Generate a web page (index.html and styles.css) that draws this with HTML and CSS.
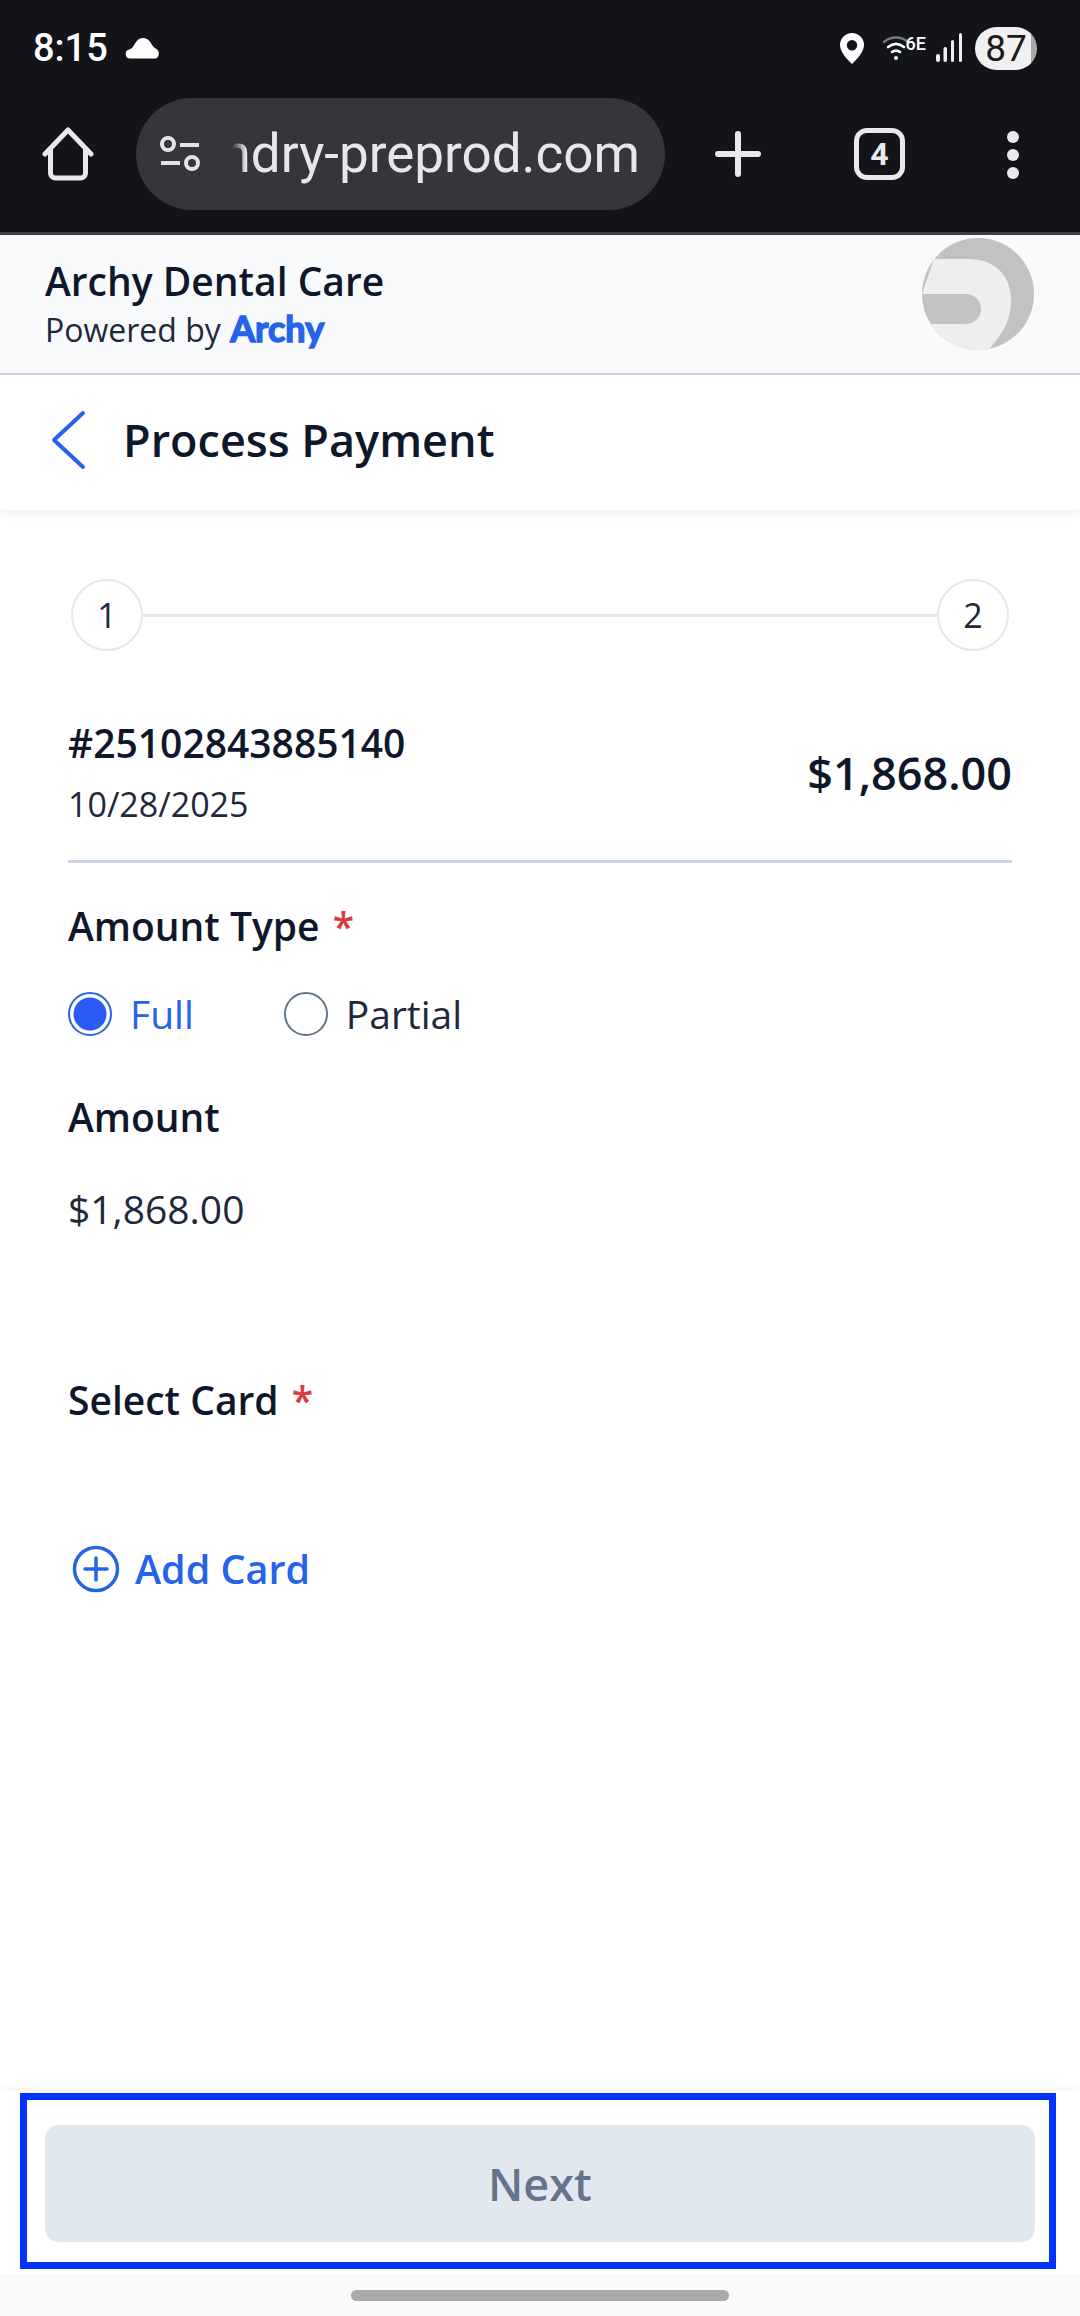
FILE: index.html
```html
<!DOCTYPE html>
<html lang="en">
<head>
  <meta charset="UTF-8">
  <title>Process Payment</title>
  <link rel="stylesheet" href="styles.css">
</head>
<body>

  <div class="browser-top">
    <div class="status-bar">
      <div class="status-left">
        <span class="clock">8:15</span>
        <svg class="cloud" width="36" height="22" viewBox="0 0 36 22"><path d="M5 21.5a4.6 4.6 0 0 1-1-9c1.2-.4 2.400-.8 3.600-2.300C10 7 12 1 18 1c5.500 0 7.500 4.500 9.500 7.500 1 1.500 2 2.500 4 3.500 3.500 1.700 3 9.500-1.500 9.500z" fill="#fff"/></svg>
      </div>
      <div class="status-right">
        <svg class="pin" width="24" height="31" viewBox="0 0 24 31"><path fill-rule="evenodd" d="M12 0a12 12 0 0 1 12 12c0 7-7 14-12 19C7 26 0 19 0 12A12 12 0 0 1 12 0zm0 7a5.200 5.200 0 1 0 0 10.400A5.200 5.200 0 0 0 12 7z" fill="#fff"/></svg>
        <div class="wifi">
          <svg width="28" height="28" viewBox="0 0 28 28" fill="none" stroke-linecap="round" stroke-width="2.600">
            <path d="M2 8C9 2 19 2 26 8" stroke="#77787c"/>
            <path d="M6 13c5-4 11-4 16 0" stroke="#fff"/>
            <path d="M10 18c3-2 5-2 8 0" stroke="#fff"/>
            <circle cx="14" cy="24" r="2" fill="#fff"/>
          </svg>
          <span class="wifi-tag">6E</span>
        </div>
        <svg class="signal" width="27" height="30" viewBox="0 0 27 30" fill="#eee">
          <rect x="0" y="21" width="4" height="8" rx="2"/>
          <rect x="7.500" y="14" width="3.500" height="15" rx="1.700"/>
          <rect x="15" y="7" width="3" height="22" rx="1.500"/>
          <rect x="23" y="0" width="3" height="29" rx="1.500"/>
        </svg>
        <div class="battery">87</div>
      </div>
    </div>

    <div class="toolbar">
      <svg class="home-icon" width="52" height="54" viewBox="0 0 52 54" fill="none" stroke="#e8e9ed" stroke-width="5" stroke-linejoin="round" stroke-linecap="round">
        <path d="M3 27L26 3l23 24"/>
        <path d="M8.500 22v24a5 5 0 0 0 5 5h25a5 5 0 0 0 5-5V22"/>
      </svg>
      <div class="url-pill">
        <svg width="42" height="38" viewBox="0 0 42 38" fill="none" stroke="#e3e4e8" stroke-width="4">
          <circle cx="9" cy="9" r="6"/>
          <path d="M21 10h19"/>
          <path d="M2 28h19"/>
          <circle cx="33" cy="28" r="6"/>
        </svg>
        <div class="url-clip"><span>foundry-preprod.com</span></div>
      </div>
      <svg class="plus-icon" width="46" height="46" viewBox="0 0 46 46" stroke="#e8e9ed" stroke-width="6" stroke-linecap="round">
        <path d="M23 3v40M3 23h40"/>
      </svg>
      <div class="tab-count">4</div>
      <div class="menu-dots"><i></i><i></i><i></i></div>
    </div>
  </div>

  <div class="clinic-bar">
    <div>
      <div class="clinic-name">Archy Dental Care</div>
      <div class="powered">Powered by <span class="archy-logo">Archy</span></div>
    </div>
    <svg class="avatar" width="112" height="112" viewBox="0 0 112 112">
      <circle cx="56" cy="56" r="56" fill="#c2c2c2"/>
      <path d="M12 21h34c28 0 43 17 43 42 0 18-8 33-22 48a56 56 0 0 1-67-55z" fill="#eeeeee"/>
      <path d="M0 56h44a15 15 0 0 1 0 30H9a56 56 0 0 1-9-30z" fill="#c2c2c2"/>
    </svg>
  </div>

  <div class="page-title">
    <svg width="36" height="60" viewBox="0 0 36 60" fill="none" stroke="#2563eb" stroke-width="4" stroke-linecap="round" stroke-linejoin="round">
      <path d="M33 3L4 30l29 27"/>
    </svg>
    <h1>Process Payment</h1>
  </div>

  <div class="main">
    <div class="stepper">
      <div class="step">1</div>
      <div class="step-line"></div>
      <div class="step">2</div>
    </div>

    <div class="invoice">
      <div>
        <div class="invoice-no">#25102843885140</div>
        <div class="invoice-date">10/28/2025</div>
      </div>
      <div class="invoice-total">$1,868.00</div>
    </div>

    <div class="label label-type">Amount Type <span class="req">*</span></div>
    <div class="radios">
      <div class="radio-item selected"><span class="radio"></span>Full</div>
      <div class="radio-item"><span class="radio"></span>Partial</div>
    </div>

    <div class="label label-amount">Amount</div>
    <div class="amount-value">$1,868.00</div>

    <div class="label label-card">Select Card <span class="req">*</span></div>
    <div class="add-card">
      <svg width="48" height="48" viewBox="0 0 48 48" fill="none" stroke="#2563eb" stroke-width="3.500" stroke-linecap="round">
        <circle cx="24" cy="24" r="21.500"/>
        <path d="M24 13v22M13 24h22"/>
      </svg>
      Add Card
    </div>
  </div>

  <div class="footer">
    <div class="footer-inner">
      <button class="next-btn">Next</button>
    </div>
    <div class="home-area"><div class="home-bar"></div></div>
    <div class="highlight"></div>
  </div>

</body>
</html>
```

FILE: styles.css
```css
* {
  box-sizing: border-box;
}

body {
  margin: 0;
  width: 1080px;
  height: 2316px;
  display: flex;
  flex-direction: column;
  overflow: hidden;
  background-color: #fff;
  font-family: "Open Sans", "Noto Sans", sans-serif;
  color: #0f172a;
}

/* browser chrome */
.browser-top {
  height: 235px;
  background-color: #12141a;
  border-bottom: 3px solid #3c3e45;
}

.status-bar {
  height: 88px;
  padding: 8px 43px 0 33px;
  display: flex;
  justify-content: space-between;
  align-items: center;
  font-family: Roboto, sans-serif;
  color: #fff;
}

.status-left {
  display: flex;
  align-items: center;
  gap: 17px;
}

.clock {
  font-size: 38px;
  font-weight: 500;
}

.status-right {
  display: flex;
  align-items: center;
}

.wifi {
  display: flex;
  margin-left: 18px;
  align-items: flex-start;
}

.wifi-tag {
  font-size: 18px;
  line-height: 20px;
  font-weight: 500;
  margin-left: -4px;
}

.signal {
  margin-left: 10px;
}

.battery {
  width: 62px;
  height: 43px;
  margin-left: 12px;
  border-radius: 22px;
  background: linear-gradient(90deg, #f0f0f0 90%, #a9a9a9 90%);
  color: #1b1b1b;
  font-size: 37px;
  line-height: 43px;
  text-align: center;
}

.toolbar {
  height: 144px;
  padding: 10px 0 0 42px;
  display: flex;
  align-items: flex-start;
}

.home-icon {
  margin-top: 29px;
}

.url-pill {
  width: 529px;
  height: 112px;
  margin-left: 42px;
  padding: 0 25px 0 23px;
  border-radius: 56px;
  background-color: #35363c;
  display: flex;
  align-items: center;
  font-family: Roboto, sans-serif;
  color: #e6e7eb;
}

.url-clip {
  flex: 1;
  overflow: hidden;
  display: flex;
  justify-content: flex-end;
  margin-left: 23px;
  font-size: 53px;
  line-height: 70px;
  white-space: nowrap;
  -webkit-mask-image: linear-gradient(90deg, transparent 8px, #000 22px);
  mask-image: linear-gradient(90deg, transparent 8px, #000 22px);
}

.plus-icon {
  margin: 33px 0 0 50px;
}

.tab-count {
  width: 51px;
  height: 52px;
  margin: 30px 0 0 93px;
  border: 5px solid #e8e9ed;
  border-radius: 13px;
  text-align: center;
  font-family: Roboto, sans-serif;
  font-weight: 700;
  font-size: 32px;
  line-height: 42px;
  color: #e8e9ed;
}

.menu-dots {
  margin: 33px 0 0 102px;
  display: flex;
  flex-direction: column;
  gap: 6px;
}

.menu-dots i {
  display: block;
  width: 12px;
  height: 12px;
  border-radius: 50%;
  background-color: #e8e9ed;
}

/* clinic header */
.clinic-bar {
  height: 140px;
  padding: 0 45px;
  background-color: #f8fafc;
  border-bottom: 2px solid #cbd5e1;
  display: flex;
  justify-content: space-between;
  align-items: flex-start;
}

.clinic-bar > div {
  padding-top: 21px;
}

.clinic-name {
  font-size: 39px;
  line-height: 50px;
  font-weight: 600;
}

.powered {
  margin-top: 1px;
  font-size: 32px;
  line-height: 42px;
  color: #1e293b;
}

.archy-logo {
  margin-left: 1px;
  font-family: Lato, sans-serif;
  font-weight: 700;
  font-size: 36px;
  color: #2563eb;
  -webkit-text-stroke: 1.5px #2563eb;
}

.avatar {
  margin: 3px 1px 0 0;
}

.page-title {
  height: 135px;
  padding: 0 0 6px 50px;
  display: flex;
  align-items: center;
  gap: 37px;
  background-color: #fff;
  box-shadow: 0 3px 10px rgba(15, 23, 42, 0.08);
}

.page-title svg {
  flex: none;
}

.page-title h1 {
  margin: 0;
  font-size: 45px;
  font-weight: 600;
}

/* form */
.main {
  flex: 1;
  padding: 69px 68px 0 68px;
}

.stepper {
  margin: 0 3px;
  display: flex;
  align-items: center;
}

.step {
  width: 72px;
  height: 72px;
  border: 2px solid #e5e7eb;
  border-radius: 50%;
  text-align: center;
  font-size: 34px;
  line-height: 68px;
  color: #1e293b;
}

.step-line {
  flex: 1;
  height: 3px;
  background-color: #e5e7eb;
}

.invoice {
  margin-top: 67px;
  padding-bottom: 33px;
  border-bottom: 3px solid #cbd5e1;
  display: flex;
  justify-content: space-between;
  align-items: center;
}

.invoice-no {
  font-size: 39px;
  line-height: 50px;
  font-weight: 600;
}

.invoice-date {
  margin-top: 14px;
  font-size: 34px;
  line-height: 45px;
  color: #1e293b;
}

.invoice-total {
  font-size: 45px;
  font-weight: 600;
}

.label {
  font-size: 39px;
  line-height: 50px;
  font-weight: 600;
}

.req {
  color: #dc3b3b;
  margin-left: 3px;
}

.label-type {
  margin-top: 38px;
}

.radios {
  margin-top: 38px;
  display: flex;
  gap: 90px;
}

.radio-item {
  display: flex;
  align-items: center;
  gap: 18px;
  font-size: 39px;
  line-height: 50px;
  color: #1e293b;
}

.radio {
  width: 44px;
  height: 44px;
  border: 2px solid #64748b;
  border-radius: 50%;
  background-color: #fff;
}

.radio-item.selected {
  color: #2563eb;
}

.radio-item.selected .radio {
  border-color: #2563eb;
  background: radial-gradient(circle, #2a5cf5 0, #2a5cf5 16px, #fff 17px);
}

.label-amount {
  margin-top: 53px;
}

.amount-value {
  margin-top: 42px;
  font-size: 39px;
  line-height: 50px;
  color: #1e293b;
}

.label-card {
  margin-top: 141px;
}

.add-card {
  margin: 117px 0 0 4px;
  display: flex;
  align-items: center;
  gap: 15px;
  font-size: 39.5px;
  font-weight: 600;
  color: #2563eb;
}

/* bottom */
.footer {
  position: relative;
  background-color: #f8fafc;
}

.footer-inner {
  height: 183px;
  padding: 34px 45px 0;
  background-color: #fff;
  box-shadow: 0 -3px 8px rgba(15, 23, 42, 0.05);
}

.next-btn {
  display: block;
  width: 100%;
  height: 117px;
  border: none;
  border-radius: 14px;
  background-color: #e2e8f0;
  color: #64748b;
  font-family: inherit;
  font-size: 45px;
  font-weight: 600;
}

.home-area {
  height: 42px;
  padding-top: 16px;
}

.home-bar {
  width: 378px;
  height: 11px;
  margin: 0 auto;
  border-radius: 6px;
  background-color: #a8a9ab;
}

/* annotation frame over the button */
.highlight {
  position: absolute;
  left: 20px;
  top: 2px;
  width: 1036px;
  height: 176px;
  border: 7px solid #0433ff;
}
```
